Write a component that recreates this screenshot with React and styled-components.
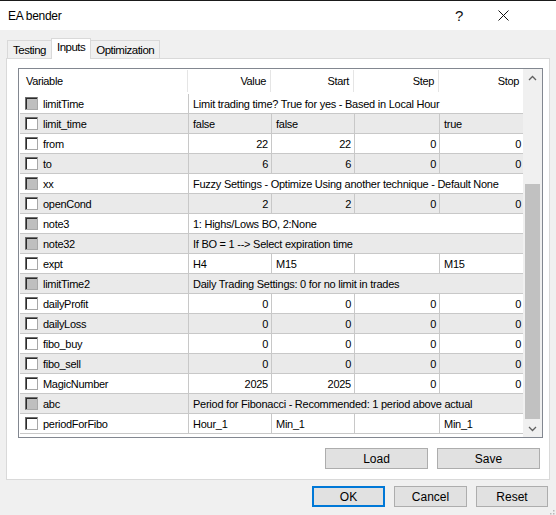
import React from "react";
import styled, { createGlobalStyle, css } from "styled-components";

const GlobalStyle = createGlobalStyle`
  html, body { margin: 0; padding: 0; background: #f0f0f0; }
  body { font-family: "Liberation Sans", Arial, sans-serif; color: #000; }
  * { box-sizing: border-box; }
`;

const Window = styled.div`
  width: 556px;
  height: 515px;
  background: #f0f0f0;
  display: flex;
  flex-direction: column;
  position: relative;
  overflow: hidden;
`;

const TitleBar = styled.div`
  height: 30px;
  background: #fff;
  border-top: 1px solid #1a1a1a;
  display: flex;
  align-items: center;
  padding: 0 31px 0 8px;
  font-size: 12px;
  letter-spacing: -0.3px;
`;

const Title = styled.div`
  flex: 1;
`;

const TitleButton = styled.div`
  width: 44px;
  height: 29px;
  display: flex;
  align-items: center;
  justify-content: center;
  font-size: 15px;
  color: #111;
`;

const Body = styled.div`
  flex: 1;
  padding: 8px 6px 0 6px;
  display: flex;
  flex-direction: column;
`;

const TabRow = styled.div`
  display: flex;
  align-items: flex-end;
  height: 20px;
  padding-left: 2px;
  position: relative;
  z-index: 1;
`;

const Tab = styled.div`
  height: 18px;
  padding: 0 5px;
  font-size: 11.5px;
  display: flex;
  align-items: center;
  border: 1px solid #d9d9d9;
  border-bottom: none;
  background: #f0f0f0;
  margin-left: -1px;
  letter-spacing: -0.5px;
  ${(p) =>
    p.$active &&
    css`
      height: 21px;
      background: #fff;
      margin-bottom: -1px;
      align-items: flex-start;
      padding-top: 2px;
    `}
`;

const Panel = styled.div`
  height: 422px;
  background: #fff;
  border: 1px solid #d9d9d9;
  padding: 9px 7px 0 11px;
  display: flex;
  flex-direction: column;
`;

const Grid = styled.div`
  width: 525px;
  height: 370px;
  border: 1px solid #828790;
  display: flex;
  background: #fff;
`;

const Table = styled.div`
  width: 504px;
  display: flex;
  flex-direction: column;
`;

const cols = "168px 83px 83px 85px 85px";

const HeaderRow = styled.div`
  display: grid;
  grid-template-columns: ${cols};
  height: 25px;
`;

const HeaderCell = styled.div`
  font-size: 11px;
  letter-spacing: -0.35px;
  display: flex;
  align-items: center;
  justify-content: ${(p) => (p.$left ? "flex-start" : "flex-end")};
  padding: 0 4px 0 7px;
  border-left: ${(p) => (p.$first ? "none" : "1px solid #e5e5e5")};
  margin: 1px 0 2px 0;
`;

const Row = styled.div`
  display: grid;
  grid-template-columns: ${cols};
  height: 20px;
  background: ${(p) => (p.$alt ? "#eaeaea" : "#fff")};
  border-bottom: 1px solid #c8c8c8;
  margin-left: 1px;
`;

const Cell = styled.div`
  font-size: 11px;
  letter-spacing: -0.25px;
  display: flex;
  align-items: center;
  white-space: nowrap;
  overflow: hidden;
  border-left: 1px solid #c8c8c8;
  padding: 1px ${(p) => (p.$right ? "3px" : "4px")} 0 4px;
  justify-content: ${(p) => (p.$right ? "flex-end" : "flex-start")};
  ${(p) => p.$span && css`grid-column: 2 / 6;`}
`;

const NameCell = styled.div`
  font-size: 11px;
  letter-spacing: -0.3px;
  display: flex;
  align-items: center;
  padding: 1px 0 0 5px;
  gap: 5px;
  white-space: nowrap;
`;

const Check = styled.span`
  width: 13px;
  height: 13px;
  margin-top: -1px;
  border: 1px solid #6d6d6d;
  border-right-color: #a8a8a8;
  border-bottom-color: #a8a8a8;
  box-shadow: inset 1px 1px 0 #2b2b2b;
  background: ${(p) => (p.$disabled ? "#bfbfbf" : "#fff")};
  flex: none;
`;

const ScrollBar = styled.div`
  width: 19px;
  background: #f0f0f0;
  display: flex;
  flex-direction: column;
  padding: 0 1px 0 1px;
`;

const Arrow = styled.div`
  height: 17px;
  display: flex;
  align-items: center;
  justify-content: center;
`;

const Track = styled.div`
  flex: 1;
  display: flex;
  flex-direction: column;
`;

const Thumb = styled.div`
  margin-top: ${(p) => p.$top}px;
  height: ${(p) => p.$h}px;
  background: #c1c1c1;
  margin-left: 1px;
  margin-right: 1px;
`;

const PanelButtons = styled.div`
  display: flex;
  justify-content: flex-end;
  gap: 9px;
  margin-top: 10px;
  padding-right: 2px;
`;

const Button = styled.div`
  width: ${(p) => p.$w}px;
  height: 21px;
  background: #e1e1e1;
  border: 1px solid #adadad;
  font-size: 12px;
  display: flex;
  align-items: center;
  justify-content: center;
  ${(p) =>
    p.$default &&
    css`
      border: 2px solid #0078d7;
    `}
`;

const DialogButtons = styled.div`
  display: flex;
  justify-content: flex-end;
  gap: 9px;
  margin-top: 6px;
  padding-right: 2px;
`;

const Grip = styled.div`
  position: absolute;
  right: 1px;
  bottom: 1px;
  width: 10px;
  height: 10px;
`;

const rows = [
  { name: "limitTime", dis: true, desc: "Limit trading time? True for yes - Based in Local Hour" },
  { name: "limit_time", vals: ["false", "false", "", "true"], text: true },
  { name: "from", vals: ["22", "22", "0", "0"] },
  { name: "to", vals: ["6", "6", "0", "0"] },
  { name: "xx", dis: true, desc: "Fuzzy Settings - Optimize Using another technique - Default None" },
  { name: "openCond", vals: ["2", "2", "0", "0"] },
  { name: "note3", dis: true, desc: "1: Highs/Lows BO, 2:None" },
  { name: "note32", dis: true, desc: "If BO = 1 --> Select expiration time" },
  { name: "expt", vals: ["H4", "M15", "", "M15"], text: true },
  { name: "limitTime2", dis: true, desc: "Daily Trading Settings: 0 for no limit in trades" },
  { name: "dailyProfit", vals: ["0", "0", "0", "0"] },
  { name: "dailyLoss", vals: ["0", "0", "0", "0"] },
  { name: "fibo_buy", vals: ["0", "0", "0", "0"] },
  { name: "fibo_sell", vals: ["0", "0", "0", "0"] },
  { name: "MagicNumber", vals: ["2025", "2025", "0", "0"] },
  { name: "abc", dis: true, desc: "Period for Fibonacci - Recommended: 1 period above actual" },
  { name: "periodForFibo", vals: ["Hour_1", "Min_1", "", "Min_1"], text: true },
];

function Chevron({ up }) {
  return (
    <svg width="9" height="6" viewBox="0 0 9 6">
      <path
        d={up ? "M1 5 L4.5 1.5 L8 5" : "M1 1 L4.5 4.5 L8 1"}
        fill="none"
        stroke="#606060"
        strokeWidth="1.3"
      />
    </svg>
  );
}

export default function App() {
  return (
    <>
      <GlobalStyle />
      <Window>
        <TitleBar>
          <Title>EA bender</Title>
          <TitleButton>?</TitleButton>
          <TitleButton>
            <svg width="11" height="11" viewBox="0 0 11 11">
              <path d="M0.5 0.5 L10.5 10.5 M10.5 0.5 L0.5 10.5" stroke="#111" strokeWidth="1" />
            </svg>
          </TitleButton>
        </TitleBar>
        <Body>
          <TabRow>
            <Tab>Testing</Tab>
            <Tab $active>Inputs</Tab>
            <Tab>Optimization</Tab>
          </TabRow>
          <Panel>
            <Grid>
              <Table>
                <HeaderRow>
                  <HeaderCell $left $first>Variable</HeaderCell>
                  <HeaderCell>Value</HeaderCell>
                  <HeaderCell>Start</HeaderCell>
                  <HeaderCell>Step</HeaderCell>
                  <HeaderCell>Stop</HeaderCell>
                </HeaderRow>
                {rows.map((r, i) => (
                  <Row key={r.name} $alt={i % 2 === 1}>
                    <NameCell>
                      <Check $disabled={r.dis} />
                      {r.name}
                    </NameCell>
                    {r.desc ? (
                      <Cell $span>{r.desc}</Cell>
                    ) : (
                      r.vals.map((v, j) => (
                        <Cell key={j} $right={!r.text}>
                          {v}
                        </Cell>
                      ))
                    )}
                  </Row>
                ))}
              </Table>
              <ScrollBar>
                <Arrow>
                  <Chevron up />
                </Arrow>
                <Track>
                  <Thumb $top={98} $h={235} />
                </Track>
                <Arrow>
                  <Chevron />
                </Arrow>
              </ScrollBar>
            </Grid>
            <PanelButtons>
              <Button $w={103}>Load</Button>
              <Button $w={103}>Save</Button>
            </PanelButtons>
          </Panel>
          <DialogButtons>
            <Button $w={73} $default>OK</Button>
            <Button $w={73}>Cancel</Button>
            <Button $w={72}>Reset</Button>
          </DialogButtons>
        </Body>
        <Grip>
          <svg width="10" height="10" viewBox="0 0 10 10">
            {[
              [8, 2], [8, 5], [8, 8], [5, 5], [5, 8], [2, 8],
            ].map(([x, y]) => (
              <rect key={`${x}-${y}`} x={x} y={y} width="1.5" height="1.5" fill="#b8b8b8" />
            ))}
          </svg>
        </Grip>
      </Window>
    </>
  );
}
